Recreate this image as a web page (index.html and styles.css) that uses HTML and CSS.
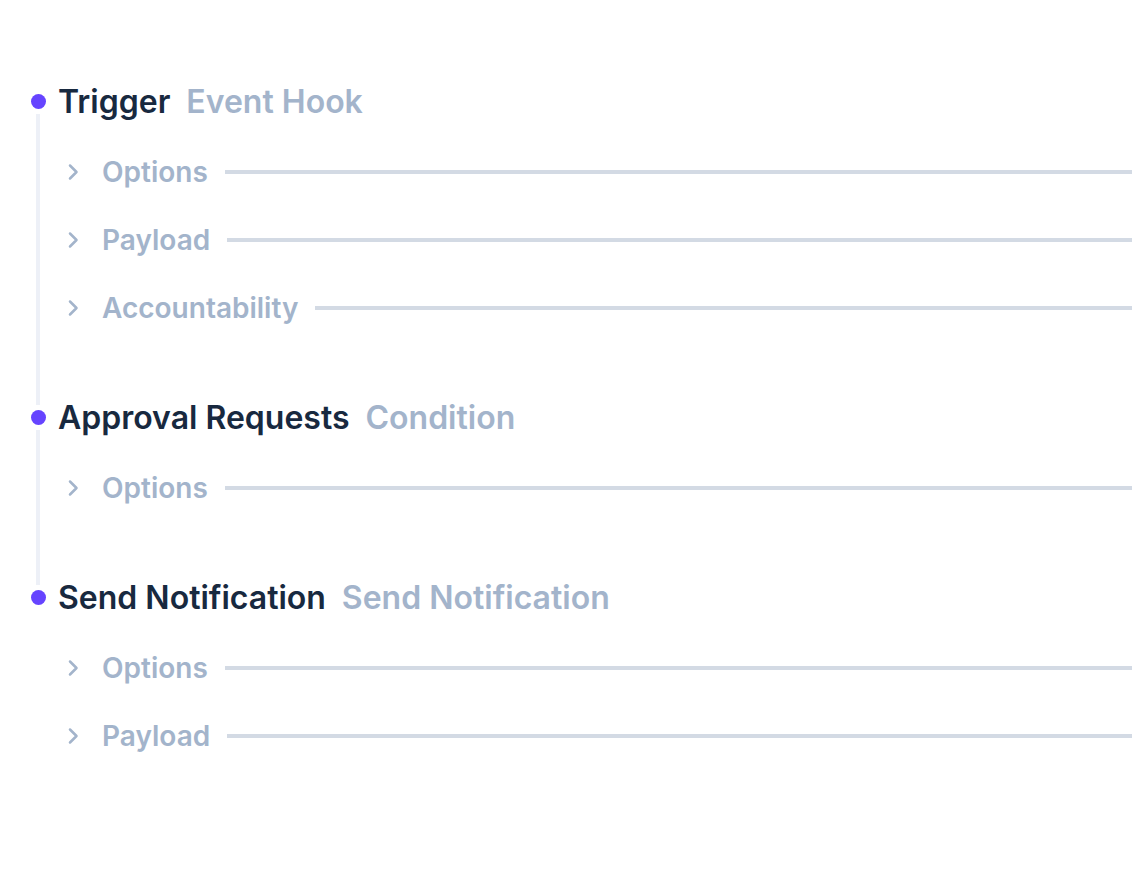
FILE: index.html
```html
<!DOCTYPE html>
<html lang="en">
<head>
    <meta charset="UTF-8">
    <meta name="viewport" content="width=device-width, initial-scale=1.0">
    <title>Flow</title>
    <link rel="stylesheet" href="styles.css">
</head>

<body>
    <div class="flow">

        <div class="step">
            <div class="step-head">
                <span class="dot"></span>
                <span class="step-name">Trigger</span>
                <span class="step-type">Event Hook</span>
            </div>
            <div class="section">
                <svg class="chevron" width="12" height="18" viewBox="0 0 12 18"><path d="M3 2.5l6.5 6.5-6.5 6.5"/></svg>
                <span class="section-name">Options</span>
                <span class="rule"></span>
            </div>
            <div class="section">
                <svg class="chevron" width="12" height="18" viewBox="0 0 12 18"><path d="M3 2.5l6.5 6.5-6.5 6.5"/></svg>
                <span class="section-name">Payload</span>
                <span class="rule"></span>
            </div>
            <div class="section">
                <svg class="chevron" width="12" height="18" viewBox="0 0 12 18"><path d="M3 2.5l6.5 6.5-6.5 6.5"/></svg>
                <span class="section-name">Accountability</span>
                <span class="rule"></span>
            </div>
        </div>

        <div class="step">
            <div class="step-head">
                <span class="dot"></span>
                <span class="step-name">Approval Requests</span>
                <span class="step-type">Condition</span>
            </div>
            <div class="section">
                <svg class="chevron" width="12" height="18" viewBox="0 0 12 18"><path d="M3 2.5l6.5 6.5-6.5 6.5"/></svg>
                <span class="section-name">Options</span>
                <span class="rule"></span>
            </div>
        </div>

        <div class="step">
            <div class="step-head">
                <span class="dot"></span>
                <span class="step-name">Send Notification</span>
                <span class="step-type">Send Notification</span>
            </div>
            <div class="section">
                <svg class="chevron" width="12" height="18" viewBox="0 0 12 18"><path d="M3 2.5l6.5 6.5-6.5 6.5"/></svg>
                <span class="section-name">Options</span>
                <span class="rule"></span>
            </div>
            <div class="section">
                <svg class="chevron" width="12" height="18" viewBox="0 0 12 18"><path d="M3 2.5l6.5 6.5-6.5 6.5"/></svg>
                <span class="section-name">Payload</span>
                <span class="rule"></span>
            </div>
        </div>

    </div>
</body>
</html>
```

FILE: styles.css
```css
body {
    margin: 0;
    background: #ffffff;
    font-family: Inter, "Noto Sans", sans-serif;
}

.flow {
    padding: 84px 0 0 31px;
    display: flex;
    flex-direction: column;
    gap: 58px;
}

.step {
    position: relative;
    display: flex;
    flex-direction: column;
}

/* connector down to the next dot */
.step:not(:last-child)::before {
    content: "";
    position: absolute;
    left: 5px;
    top: 30px;
    bottom: -63px;
    width: 4px;
    background: #edf0f7;
}

.step-head {
    display: flex;
    align-items: center;
    height: 34px;
    margin-bottom: 20px;
}

.dot {
    width: 15px;
    height: 15px;
    border-radius: 50%;
    background: #6644ff;
    margin-right: 12px;
    flex-shrink: 0;
}

.step-name {
    font-size: 32px;
    font-weight: 600;
    color: #18293f;
    margin-right: 16px;
}

.step-type {
    font-size: 32px;
    font-weight: 600;
    color: #a3b4cb;
}

.section {
    display: flex;
    align-items: center;
    height: 68px;
    padding-left: 36px;
}

.chevron {
    fill: none;
    stroke: #a3b4cb;
    stroke-width: 2.5;
    stroke-linecap: round;
    stroke-linejoin: round;
    margin-right: 23px;
}

.section-name {
    font-size: 28px;
    font-weight: 600;
    color: #a3b4cb;
}

.rule {
    flex: 1;
    height: 4px;
    background: #d3dae4;
    margin-left: 17px;
}
```
